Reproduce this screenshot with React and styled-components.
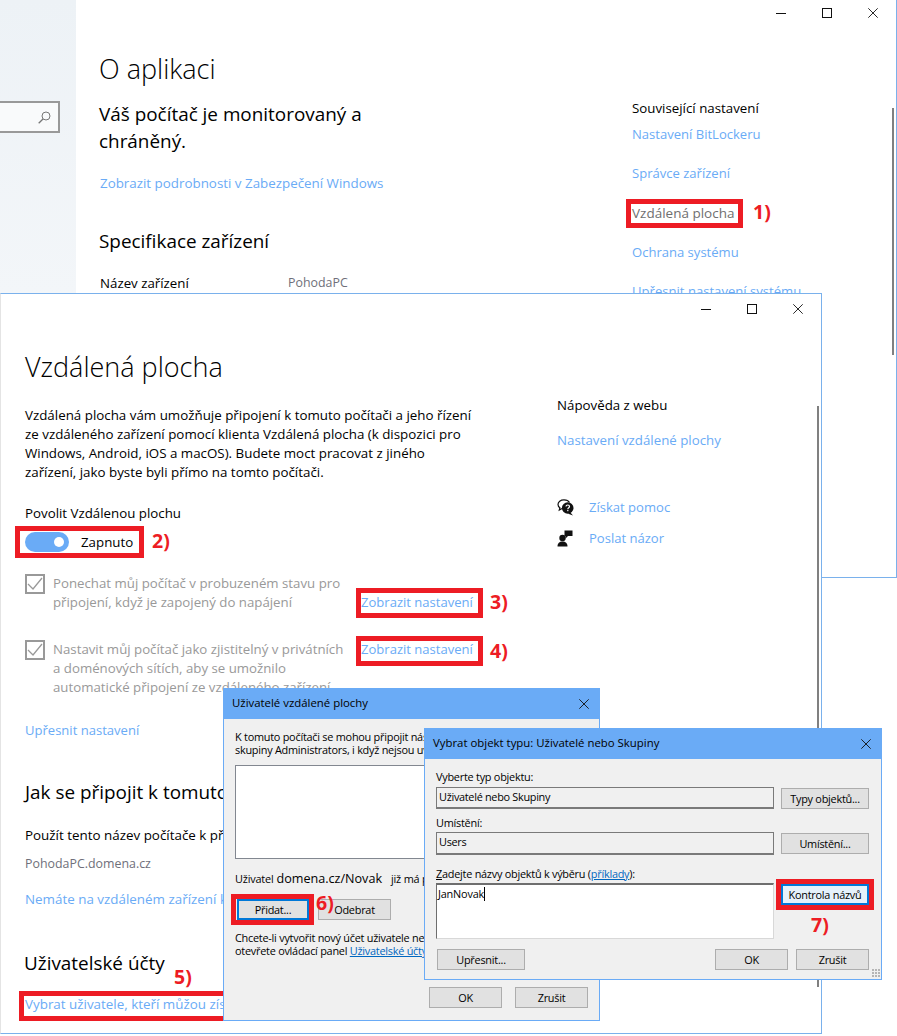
import React from "react";
import styled, { createGlobalStyle } from "styled-components";

const FONT = `"Open Sans", "Noto Sans", sans-serif`;
const BLUE = "#6aabf6";
const EDGE = "#7ab1ec";

const Global = createGlobalStyle`
  html, body { margin: 0; padding: 0; background: #fff; }
  body { font-family: ${FONT}; color: #000; }
  * { box-sizing: border-box; }
`;

const Desktop = styled.div`
  position: relative;
  width: 897px;
  height: 1036px;
  overflow: hidden;
  background: #fff;
`;

const Sidebar = styled.div`
  position: absolute;
  left: 0;
  top: 0;
  width: 76px;
  height: 294px;
  background: linear-gradient(180deg, #edf2f6, #f3f6f9);
`;
const SearchBox = styled.div`
  margin-top: 101px;
  margin-left: -4px;
  width: 64px;
  height: 32px;
  border: 2px solid #999;
  background: #f9fafb;
  display: flex;
  align-items: center;
  justify-content: flex-end;
  padding-right: 7px;
`;

const Win = styled.div`
  position: absolute;
  left: ${(p) => p.$x}px;
  top: ${(p) => p.$y}px;
  width: ${(p) => p.$w}px;
  height: ${(p) => p.$h}px;
  background: #fff;
  display: grid;
  grid-template-columns: ${(p) => p.$split}px 1fr;
`;
const BackWin = styled(Win)`
  border-right: 1px solid ${EDGE};
  border-bottom: 1px solid ${EDGE};
  overflow: hidden;
`;
const FrontWin = styled(Win)`
  border: 1px solid ${EDGE};
  border-left-color: #e4e4e4;
  overflow: hidden;
`;

const Controls = styled.div`
  position: absolute;
  top: ${(p) => p.$top}px;
  right: 0;
  display: flex;
`;
const CtlButton = styled.div`
  width: 46px;
  height: 30px;
  display: flex;
  align-items: center;
  justify-content: center;
`;

const Scrollbar = styled.div`
  position: absolute;
  left: ${(p) => p.$x}px;
  top: ${(p) => p.$y}px;
  width: 2px;
  height: ${(p) => p.$h}px;
  background: #808080;
`;

const MainCol = styled.div`
  padding-left: ${(p) => p.$left}px;
  padding-top: ${(p) => p.$top}px;
  white-space: nowrap;
`;
const SideCol = styled.div`
  padding-top: ${(p) => p.$top}px;
  white-space: nowrap;
`;

const PageTitle = styled.h1`
  margin: 0 0 0 ${(p) => p.$ml ?? -1}px;
  font-size: 27px;
  font-weight: 300;
  line-height: 34px;
  color: #000;
`;
const Heading = styled.h2`
  margin: ${(p) => p.$mt || 0}px 0 0 ${(p) => p.$ml ?? -1}px;
  font-size: 18.9px;
  font-weight: 400;
  line-height: ${(p) => p.$lh || 28}px;
  color: #000;
`;
const Text = styled.div`
  margin-top: ${(p) => p.$mt || 0}px;
  font-size: ${(p) => p.$size || 13.3}px;
  line-height: ${(p) => p.$lh || 20}px;
  color: #000;
`;
const Para = styled(Text)`
  font-size: 13.35px;
  line-height: 19px;
`;
const Value = styled(Text)`
  font-size: 12.4px;
  color: #6f6f7a;
`;
const Muted = styled(Text)`
  font-size: 13.5px;
  color: #6f6f6f;
`;
const Link = styled(Text)`
  font-size: ${(p) => p.$size || 13.05}px;
  color: ${BLUE};
`;
const SettingRow = styled.div`
  display: flex;
  margin-top: ${(p) => p.$mt || 0}px;
`;
const SettingLabel = styled(Text)`
  width: 188px;
`;
const RelatedList = styled.div`
  display: flex;
  flex-direction: column;
  gap: 19.3px;
  margin-top: 6px;
`;

const ToggleRow = styled.div`
  display: flex;
  align-items: center;
  gap: 12px;
  margin-top: ${(p) => p.$mt}px;
  height: 20px;
`;
const Track = styled.div`
  width: 44px;
  height: 20px;
  border-radius: 10px;
  background: ${BLUE};
  display: flex;
  align-items: center;
  justify-content: flex-end;
  padding-right: 5px;
`;
const Knob = styled.div`
  width: 10px;
  height: 10px;
  border-radius: 50%;
  background: #fff;
`;
const CheckRow = styled.div`
  display: grid;
  grid-template-columns: 20px 308px auto;
  column-gap: 8px;
  margin-top: ${(p) => p.$mt}px;
`;
const CheckBox = styled.div`
  width: 20px;
  height: 20px;
  border: 2px solid #999;
  display: flex;
  align-items: center;
  justify-content: center;
`;
const CheckText = styled.div`
  font-size: 13.25px;
  line-height: 19px;
  color: #999;
  width: 300px;
`;
const CheckLink = styled(Link)`
  align-self: ${(p) => p.$align};
  margin-left: -8px;
  line-height: 19px;
`;
const HelpRow = styled.div`
  display: flex;
  align-items: center;
  gap: ${(p) => p.$gap}px;
  margin-top: ${(p) => p.$mt}px;
  height: 20px;
`;

/* red annotations */
const RedBox = styled.div`
  position: absolute;
  left: ${(p) => p.$x}px;
  top: ${(p) => p.$y}px;
  width: ${(p) => p.$w}px;
  height: ${(p) => p.$h}px;
  border: 5px solid #ed1c24;
  pointer-events: none;
`;
const Tag = styled.div`
  position: absolute;
  left: ${(p) => p.$x}px;
  top: ${(p) => p.$y}px;
  font-size: 19.5px;
  font-weight: 700;
  line-height: 24px;
  color: #ed1c24;
`;

/* dialogs */
const Dialog = styled.div`
  position: absolute;
  left: ${(p) => p.$x}px;
  top: ${(p) => p.$y}px;
  width: ${(p) => p.$w}px;
  height: ${(p) => p.$h}px;
  background: #f0f0f0;
  border: 1px solid ${BLUE};
  white-space: nowrap;
`;
const DialogTitle = styled.div`
  height: 30px;
  background: ${BLUE};
  display: flex;
  align-items: center;
  justify-content: space-between;
  padding: 0 10px 0 8px;
  font-size: 11.4px;
  color: #000;
`;
const TitleText = styled.span`
  margin-top: -3px;
`;
const DialogText = styled.div`
  margin-top: ${(p) => p.$mt || 0}px;
  font-size: 10.9px;
  letter-spacing: -0.25px;
  line-height: 13px;
  color: #000;
`;
const Body1 = styled.div`
  padding: 11px 11px 0 11px;
`;
const ListBox = styled.div`
  margin-top: 9px;
  width: 340px;
  height: 94px;
  background: #fff;
  border: 1px solid #828790;
`;
const UserLine = styled.div`
  margin-top: 11px;
  display: flex;
  align-items: baseline;
  font-size: 10.9px;
  letter-spacing: -0.2px;
  line-height: 18px;
  color: #000;
`;
const UserName = styled.span`
  font-size: 12.6px;
  letter-spacing: 0;
  margin: 0 9px 0 3px;
`;
const ButtonRow = styled.div`
  display: flex;
  gap: ${(p) => p.$gap || 9}px;
  margin: ${(p) => p.$mt || 0}px 0 0 ${(p) => p.$ml || 0}px;
`;
const Btn = styled.div`
  width: ${(p) => p.$w || 73}px;
  height: 21px;
  background: ${(p) => (p.$focus ? "#e5f1fb" : "#e1e1e1")};
  border: ${(p) => (p.$focus || p.$ring ? "2px solid #0078d7" : "1px solid #adadad")};
  display: flex;
  align-items: center;
  justify-content: center;
  font-size: 10.9px;
  letter-spacing: -0.25px;
  color: #000;
`;
const DialogLink = styled.span`
  color: #0067c0;
  text-decoration: underline;
`;
const Body2 = styled.div`
  padding: 11px 12px 0 11px;
  display: flex;
  flex-direction: column;
  position: relative;
  height: calc(100% - 30px);
`;
const FieldRow = styled.div`
  display: flex;
  align-items: flex-start;
  gap: 7px;
  margin-top: ${(p) => p.$mt || 0}px;
  ${Btn} {
    margin-top: 1px;
  }
`;
const Field = styled.div`
  width: 338px;
  height: ${(p) => p.$h || 22}px;
  background: #f0f0f0;
  border: 1px solid #7a7a7a;
  border-bottom-width: 2px;
  padding: 1px 2px;
  font-size: 10.9px;
  letter-spacing: -0.3px;
  line-height: 15px;
  color: #000;
`;
const TextArea = styled.div`
  width: 338px;
  height: 56px;
  background: #fff;
  border-style: solid;
  border-width: 2px 1px 1px 1px;
  border-color: #6e6e6e #d8d8d8 #d8d8d8 #6e6e6e;
  padding: 0 1px;
  font-size: 10.9px;
  letter-spacing: -0.2px;
  line-height: 18px;
  color: #000;
`;
const Caret = styled.span`
  display: inline-block;
  width: 1px;
  height: 14px;
  background: #000;
  vertical-align: -3px;
`;
const FooterRow = styled.div`
  display: flex;
  justify-content: space-between;
  width: 432px;
  margin: 10px 0 0 1px;
`;
const Grip = styled.div`
  position: absolute;
  right: 1px;
  bottom: 2px;
  width: 8px;
  height: 8px;
  background: radial-gradient(circle at 1px 1px, #b5b5b5 1px, transparent 1.2px) 0 0 / 3px 3px;
`;
const Under = styled.span`
  text-decoration: underline;
`;

const MinIcon = () => (
  <svg width="10" height="10" viewBox="0 0 10 10"><path d="M0 5.5h10" stroke="#111" fill="none" /></svg>
);
const MaxIcon = () => (
  <svg width="10" height="10" viewBox="0 0 10 10"><rect x=".5" y=".5" width="9" height="9" stroke="#111" fill="none" /></svg>
);
const CloseIcon = ({ s = 10 }) => (
  <svg width={s} height={s} viewBox="0 0 10 10"><path d="M.3.3l9.4 9.4M9.7.3L.3 9.7" stroke="#111" strokeWidth={0.9} fill="none" /></svg>
);
const WindowControls = ({ top }) => (
  <Controls $top={top}>
    <CtlButton><MinIcon /></CtlButton>
    <CtlButton><MaxIcon /></CtlButton>
    <CtlButton><CloseIcon /></CtlButton>
  </Controls>
);
const SearchIcon = () => (
  <svg width="13" height="13" viewBox="0 0 13 13">
    <circle cx="8" cy="5" r="4" stroke="#777" fill="none" />
    <path d="M5 8l-4.300 4.300" stroke="#777" strokeWidth="1.300" fill="none" />
  </svg>
);
const CheckMark = () => (
  <svg width="16" height="16" viewBox="0 0 16 16"><path d="M1 8l5 5L15 2" stroke="#999" strokeWidth="1.300" fill="none" /></svg>
);
const HelpIcon = () => (
  <svg width="17" height="17" viewBox="0 0 17 17">
    <path d="M7 .8C3.500.8 1 2.900 1 5.400c0 1.400.7 2.500 1.900 3.300L2.300 11l2.800-1.500" stroke="#111" strokeWidth="1.200" fill="none" />
    <path d="M7 .8c2.600 0 4.600 1 5.500 2.800" stroke="#111" strokeWidth="1.200" fill="none" />
    <circle cx="10.700" cy="9" r="5.800" fill="#111" />
    <path d="M13 13l3 3.500-4.800-1.800z" fill="#111" />
    <path d="M9 7.500c0-2 3.500-2 3.500 0 0 1.300-1.700 1.300-1.700 2.700" stroke="#fff" strokeWidth="1.200" fill="none" />
    <rect x="10.200" y="11" width="1.200" height="1.200" fill="#fff" />
  </svg>
);
const FeedbackIcon = () => (
  <svg width="16" height="17" viewBox="0 0 16 17">
    <circle cx="5.500" cy="8" r="3.200" fill="#111" />
    <path d="M.5 16.500c0-3.500 2-5 5-5s5 1.500 5 5z" fill="#111" />
    <path d="M7.500.5H15.500V6H11L8.500 8.500V6H7.500z" fill="#111" />
  </svg>
);

export default function App() {
  return (
    <Desktop>
      <Global />
      <Sidebar>
        <SearchBox><SearchIcon /></SearchBox>
      </Sidebar>

      <BackWin $x={76} $y={0} $w={821} $h={578} $split={556}>
        <MainCol $left={24} $top={52}>
          <PageTitle>O aplikaci</PageTitle>
          <Heading $mt={15} $lh={27}>Váš počítač je monitorovaný a<br />chráněný.</Heading>
          <Link $mt={18} $size={13.37}>Zobrazit podrobnosti v Zabezpečení Windows</Link>
          <Heading $mt={34}>Specifikace zařízení</Heading>
          <SettingRow $mt={18}>
            <SettingLabel>Název zařízení</SettingLabel>
            <Value>PohodaPC</Value>
          </SettingRow>
        </MainCol>
        <SideCol $top={98}>
          <Text>Související nastavení</Text>
          <RelatedList>
            <Link>Nastavení BitLockeru</Link>
            <Link>Správce zařízení</Link>
            <Muted>Vzdálená plocha</Muted>
            <Link>Ochrana systému</Link>
            <Link $size={13.1}>Upřesnit nastavení systému</Link>
          </RelatedList>
        </SideCol>
        <WindowControls top={-2} />
      </BackWin>
      <Scrollbar $x={892} $y={108} $h={247} />
      <RedBox $x={626} $y={199} $w={117} $h={29} />
      <Tag $x={753} $y={200}>1)</Tag>

      <FrontWin $x={0} $y={293} $w={822} $h={741} $split={556}>
        <MainCol $left={24} $top={56}>
          <PageTitle $ml={0}>Vzdálená plocha</PageTitle>
          <Para $mt={22}>
            Vzdálená plocha vám umožňuje připojení k tomuto počítači a jeho řízení<br />
            ze vzdáleného zařízení pomocí klienta Vzdálená plocha (k dispozici pro<br />
            Windows, Android, iOS a macOS). Budete moct pracovat z jiného<br />
            zařízení, jako byste byli přímo na tomto počítači.
          </Para>
          <Text $mt={21}>Povolit Vzdálenou plochu</Text>
          <ToggleRow $mt={9}>
            <Track><Knob /></Track>
            <Text>Zapnuto</Text>
          </ToggleRow>
          <CheckRow $mt={22}>
            <CheckBox><CheckMark /></CheckBox>
            <CheckText>Ponechat můj počítač v probuzeném stavu pro<br />připojení, když je zapojený do napájení</CheckText>
            <CheckLink $align="end">Zobrazit nastavení</CheckLink>
          </CheckRow>
          <CheckRow $mt={28}>
            <CheckBox><CheckMark /></CheckBox>
            <CheckText>Nastavit můj počítač jako zjistitelný v privátních<br />a doménových sítích, aby se umožnilo<br />automatické připojení ze vzdáleného zařízení</CheckText>
            <CheckLink $align="start">Zobrazit nastavení</CheckLink>
          </CheckRow>
          <Link $mt={23}>Upřesnit nastavení</Link>
          <Heading $mt={38} $ml={0}>Jak se připojit k tomuto počítači</Heading>
          <Text $mt={19} $size={13.4}>Použít tento název počítače k připojení:</Text>
          <Value $mt={9}>PohodaPC.domena.cz</Value>
          <Link $mt={15} $size={13.4}>Nemáte na vzdáleném zařízení klienta Vzdálená plocha?</Link>
          <Heading $mt={40}>Uživatelské účty</Heading>
          <Link $mt={17} $size={13.4}>Vybrat uživatele, kteří můžou získat vzdálený přístup k tomuto počítači</Link>
        </MainCol>
        <SideCol $top={101}>
          <Text>Nápověda z webu</Text>
          <Link $mt={15} $size={13.3}>Nastavení vzdálené plochy</Link>
          <HelpRow $mt={47} $gap={15}><HelpIcon /><Link>Získat pomoc</Link></HelpRow>
          <HelpRow $mt={11} $gap={16}><FeedbackIcon /><Link>Poslat názor</Link></HelpRow>
        </SideCol>
        <WindowControls top={0} />
      </FrontWin>
      <Scrollbar $x={817} $y={406} $h={581} />
      <RedBox $x={15} $y={526} $w={129} $h={32} />
      <Tag $x={152} $y={529}>2)</Tag>
      <RedBox $x={356} $y={588} $w={127} $h={30} />
      <Tag $x={490} $y={590}>3)</Tag>
      <RedBox $x={356} $y={636} $w={127} $h={30} />
      <Tag $x={490} $y={639}>4)</Tag>
      <RedBox $x={19} $y={991} $w={300} $h={30} />
      <Tag $x={174} $y={965}>5)</Tag>

      <Dialog $x={223} $y={688} $w={377} $h={333}>
        <DialogTitle><TitleText>Uživatelé vzdálené plochy</TitleText><CloseIcon /></DialogTitle>
        <Body1>
          <DialogText>
            K tomuto počítači se mohou připojit následující uživatelé a členové<br />
            skupiny Administrators, i když nejsou uvedeni.
          </DialogText>
          <ListBox />
          <UserLine>Uživatel<UserName>domena.cz/Novak</UserName>již má přístup.</UserLine>
          <ButtonRow $mt={11} $ml={2}>
            <Btn $ring $w={72}>Přidat...</Btn>
            <Btn>Odebrat</Btn>
          </ButtonRow>
          <DialogText $mt={11}>
            Chcete-li vytvořit nový účet uživatele nebo skupinu,<br />
            otevřete ovládací panel <DialogLink>Uživatelské účty</DialogLink>.
          </DialogText>
          <ButtonRow $mt={30} $gap={13} $ml={194}>
            <Btn>OK</Btn>
            <Btn>Zrušit</Btn>
          </ButtonRow>
        </Body1>
      </Dialog>
      <RedBox $x={231} $y={894} $w={83} $h={31} />
      <Tag $x={316} $y={891}>6)</Tag>

      <Dialog $x={424} $y={728} $w={458} $h={252}>
        <DialogTitle><TitleText>Vybrat objekt typu: Uživatelé nebo Skupiny</TitleText><CloseIcon /></DialogTitle>
        <Body2>
          <DialogText>Vyberte typ objektu:</DialogText>
          <FieldRow $mt={4}>
            <Field>Uživatelé nebo Skupiny</Field>
            <Btn $w={88}>Typy objektů...</Btn>
          </FieldRow>
          <DialogText $mt={7}>Umístění:</DialogText>
          <FieldRow $mt={3}>
            <Field $h={23}>Users</Field>
            <Btn $w={88}>Umístění...</Btn>
          </FieldRow>
          <DialogText $mt={12}><Under>Z</Under>adejte názvy objektů k výběru (<DialogLink>příklady</DialogLink>):</DialogText>
          <FieldRow $mt={3}>
            <TextArea>JanNovak<Caret /></TextArea>
            <Btn $w={88} $focus>Kontrola názvů</Btn>
          </FieldRow>
          <FooterRow>
            <Btn $w={88}>Upřesnit...</Btn>
            <ButtonRow $gap={8}>
              <Btn>OK</Btn>
              <Btn>Zrušit</Btn>
            </ButtonRow>
          </FooterRow>
          <Grip />
        </Body2>
      </Dialog>
      <RedBox $x={776} $y={879} $w={98} $h={31} />
      <Tag $x={811} $y={913}>7)</Tag>
    </Desktop>
  );
}
